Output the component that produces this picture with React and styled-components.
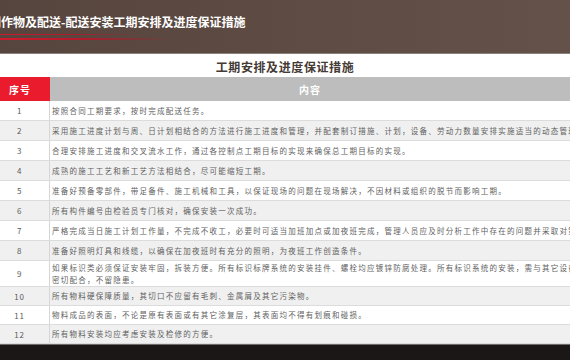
import React from "react";
import styled, { createGlobalStyle } from "styled-components";

const GlobalStyle = createGlobalStyle`
  html, body {
    margin: 0;
    padding: 0;
    width: 570px;
    height: 360px;
    overflow: hidden;
    background: #1b1717;
  }
  body {
    font-family: "Noto Sans CJK SC", "Noto Sans", sans-serif;
  }
`;

const Page = styled.div`
  width: 570px;
  height: 360px;
  display: flex;
  flex-direction: column;
  overflow: hidden;
`;

const Header = styled.header`
  height: 53px;
  flex: none;
  background: linear-gradient(90deg, #56453e 0%, #5e4b43 50%, #64524a 100%);
  border-bottom: 1px solid #8b807c;
  display: flex;
  flex-direction: column;
  overflow: hidden;
`;

const HeaderTitle = styled.h1`
  margin: 14px 0 0 -11px;
  font-size: 12px;
  line-height: 16px;
  font-weight: 700;
  color: #ffffff;
  white-space: nowrap;
`;

const RedRule = styled.div`
  margin-top: ${(p) => p.$gap}px;
  height: ${(p) => p.$h}px;
  width: ${(p) => p.$w}px;
  background: linear-gradient(90deg, #d01a2c 0%, #b01a2a 50%, rgba(176, 26, 42, 0) 100%);
`;

const Main = styled.main`
  background: #ffffff;
  flex: none;
  display: flex;
  flex-direction: column;
`;

const SubTitle = styled.h2`
  margin: 0;
  height: 23px;
  padding-top: 1px;
  box-sizing: border-box;
  text-align: center;
  font-size: 12px;
  line-height: 23px;
  font-weight: 700;
  color: #463a35;
  letter-spacing: 0.6px;
`;

const Table = styled.div`
  display: flex;
  flex-direction: column;
`;

const HeadRow = styled.div`
  display: grid;
  grid-template-columns: 50px 1fr;
  height: 24px;
  background: #bdbdbd;
`;

const HeadCell = styled.div`
  display: flex;
  align-items: center;
  justify-content: center;
  font-size: 10px;
  font-weight: 700;
  color: #ffffff;
  letter-spacing: 1px;
  background: ${(p) => (p.$red ? "#ea1b2d" : "transparent")};
  padding-right: ${(p) => (p.$red ? "10px" : "0")};
`;

const Row = styled.div`
  display: grid;
  grid-template-columns: 50px 1fr;
  height: ${(p) => p.$h}px;
  box-sizing: border-box;
  background: ${(p) => (p.$alt ? "#f0f0f0" : "#ffffff")};
  border-bottom: 1px solid #dcdcdc;
`;

const NumCell = styled.div`
  display: flex;
  align-items: center;
  justify-content: center;
  padding-right: 10px;
  border-right: 1px solid #d6d6d6;
  font-size: 8px;
  color: #5a5a5a;
  letter-spacing: 0.8px;
`;

const TextCell = styled.div`
  display: flex;
  flex-direction: column;
  justify-content: center;
  padding-left: 2px;
  overflow: hidden;
`;

const Line = styled.div`
  font-size: 7.5px;
  line-height: 12px;
  letter-spacing: 1.25px;
  color: #5f5f5f;
  white-space: nowrap;
`;

const Footer = styled.footer`
  flex: 1;
  background: #1b1717;
  border-top: 1px solid #6e6a69;
`;

const rows = [
  ["按照合同工期要求，按时完成配送任务。"],
  ["采用施工进度计划与周、日计划相结合的方法进行施工进度和管理，并配套制订措施、计划，设备、劳动力数量安排实施适当的动态管理。"],
  ["合理安排施工进度和交叉流水工作，通过各控制点工期目标的实现来确保总工期目标的实现。"],
  ["成熟的施工工艺和新工艺方法相结合，尽可能缩短工期。"],
  ["准备好预备零部件，带足备件、施工机械和工具，以保证现场的问题在现场解决，不因材料或组织的脱节而影响工期。"],
  ["所有构件编号由检验员专门核对，确保安装一次成功。"],
  ["严格完成当日施工计划工作量，不完成不收工，必要时可适当加班加点或加夜班完成，管理人员应及时分析工作中存在的问题并采取对策。"],
  ["准备好照明灯具和线缆，以确保在加夜班时有充分的照明，为夜班工作创造条件。"],
  [
    "如果标识类必须保证安装牢固，拆装方便。所有标识标牌系统的安装挂件、螺栓均应镀锌防腐处理。所有标识系统的安装，需与其它设备",
    "密切配合，不留隐患。",
  ],
  ["所有物料硬保障质量，其切口不应留有毛刺、金属屑及其它污染物。"],
  ["物料成品的表面，不论是原有表面或有其它涂复层，其表面均不得有划痕和碰损。"],
  ["所有物料安装均应考虑安装及检修的方便。"],
];

const heightFor = (i, lines) => {
  if (lines.length > 1) return 26;
  return i < 8 ? 20 : 19;
};

export default function App() {
  return (
    <Page>
      <GlobalStyle />
      <Header>
        <HeaderTitle>制作物及配送-配送安装工期安排及进度保证措施</HeaderTitle>
        <RedRule $gap={4} $h={1} $w={140} />
        <RedRule $gap={3} $h={2} $w={170} />
      </Header>
      <Main>
        <SubTitle>工期安排及进度保证措施</SubTitle>
        <Table>
          <HeadRow>
            <HeadCell $red>序号</HeadCell>
            <HeadCell>内容</HeadCell>
          </HeadRow>
          {rows.map((lines, i) => (
            <Row key={i} $alt={i % 2 === 1} $h={heightFor(i, lines)}>
              <NumCell>{i + 1}</NumCell>
              <TextCell>
                {lines.map((t, j) => (
                  <Line key={j}>{t}</Line>
                ))}
              </TextCell>
            </Row>
          ))}
        </Table>
      </Main>
      <Footer />
    </Page>
  );
}
